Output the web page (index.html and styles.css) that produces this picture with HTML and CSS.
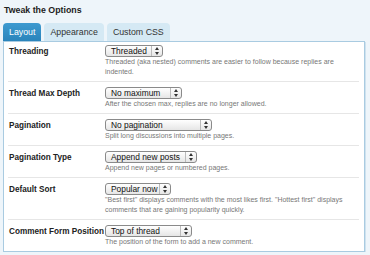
FILE: index.html
```html
<!DOCTYPE html>
<html lang="en">
<head>
  <meta charset="UTF-8">
  <title>Tweak the Options</title>
  <link rel="stylesheet" href="styles.css">
</head>
<body>
  <div class="wrap">
    <h3 class="title">Tweak the Options</h3>
    <div class="tabs">
      <div class="tab active">Layout</div>
      <div class="tab">Appearance</div>
      <div class="tab">Custom CSS</div>
    </div>
    <div class="panel">
      <div class="row">
        <div class="label">Threading</div>
        <div class="field">
          <div class="select" style="width: 58px">Threaded<span class="arrows"></span></div>
          <div class="desc">Threaded (aka nested) comments are easier to follow because replies are indented.</div>
        </div>
      </div>
      <div class="row">
        <div class="label">Thread Max Depth</div>
        <div class="field">
          <div class="select" style="width: 77px">No maximum<span class="arrows"></span></div>
          <div class="desc">After the chosen max, replies are no longer allowed.</div>
        </div>
      </div>
      <div class="row">
        <div class="label">Pagination</div>
        <div class="field">
          <div class="select" style="width: 107px">No pagination<span class="arrows"></span></div>
          <div class="desc">Split long discussions into multiple pages.</div>
        </div>
      </div>
      <div class="row">
        <div class="label">Pagination Type</div>
        <div class="field">
          <div class="select" style="width: 92px">Append new posts<span class="arrows"></span></div>
          <div class="desc">Append new pages or numbered pages.</div>
        </div>
      </div>
      <div class="row">
        <div class="label">Default Sort</div>
        <div class="field">
          <div class="select" style="width: 66px">Popular now<span class="arrows"></span></div>
          <div class="desc">"Best first" displays comments with the most likes first. "Hottest first" displays comments that are gaining popularity quickly.</div>
        </div>
      </div>
      <div class="row">
        <div class="label">Comment Form Position</div>
        <div class="field">
          <div class="select" style="width: 87px">Top of thread<span class="arrows"></span></div>
          <div class="desc">The position of the form to add a new comment.</div>
        </div>
      </div>
    </div>
  </div>
</body>
</html>
```

FILE: styles.css
```css
body {
  margin: 0;
  background-color: #eef5fa;
  font-family: "Liberation Sans", Arial, sans-serif;
  color: #222;
}

.wrap {
  padding: 5px 4px 0 3px;
}

.title {
  margin: 0 0 8px 1px;
  font-size: 8.8px;
  font-weight: bold;
  line-height: 10px;
  color: #222;
}

.tabs {
  display: flex;
  gap: 3px;
}

.tab {
  height: 18px;
  line-height: 19px;
  padding: 0 6px;
  font-size: 8.8px;
  color: #333;
  background-color: #d5e9f4;
  border-radius: 4px 4px 0 0;
}

.tab.active {
  background: linear-gradient(#3d9ad0, #2a84bb);
  color: #fff;
}

.panel {
  background-color: #fff;
  border: 1px solid #a9cbe1;
  box-shadow: 1px 1px 0 #cfe2ef;
  width: 362px;
  box-sizing: border-box;
  padding: 0 5px 4px 4px;
}

.row {
  display: flex;
  padding: 5px 0 4px;
  border-bottom: 1px solid #e6e6e6;
}

.row:first-child {
  padding-top: 3px;
}

.row:last-child {
  border-bottom: none;
  padding-bottom: 0;
}

.label {
  width: 96px;
  padding-left: 1px;
  padding-top: 1px;
  font-size: 8.2px;
  line-height: 12px;
  font-weight: bold;
  color: #222;
  white-space: nowrap;
}

.field {
  flex: 1;
}

.select {
  position: relative;
  box-sizing: border-box;
  height: 12px;
  line-height: 11px;
  padding-left: 5px;
  font-size: 8.4px;
  color: #111;
  white-space: nowrap;
  border: 1px solid #8a8a8a;
  border-radius: 3px;
  background: linear-gradient(#ffffff, #e6e6e6);
}

.arrows {
  position: absolute;
  right: 0;
  top: 0;
  width: 10px;
  height: 10px;
  border-left: 1px solid #bbb;
}

.arrows::before,
.arrows::after {
  content: "";
  position: absolute;
  left: 3px;
  border-left: 2px solid transparent;
  border-right: 2px solid transparent;
}

.arrows::before {
  top: 1px;
  border-bottom: 3px solid #333;
}

.arrows::after {
  top: 6px;
  border-top: 3px solid #333;
}

.desc {
  font-size: 7px;
  line-height: 10px;
  color: #777;
}
```
